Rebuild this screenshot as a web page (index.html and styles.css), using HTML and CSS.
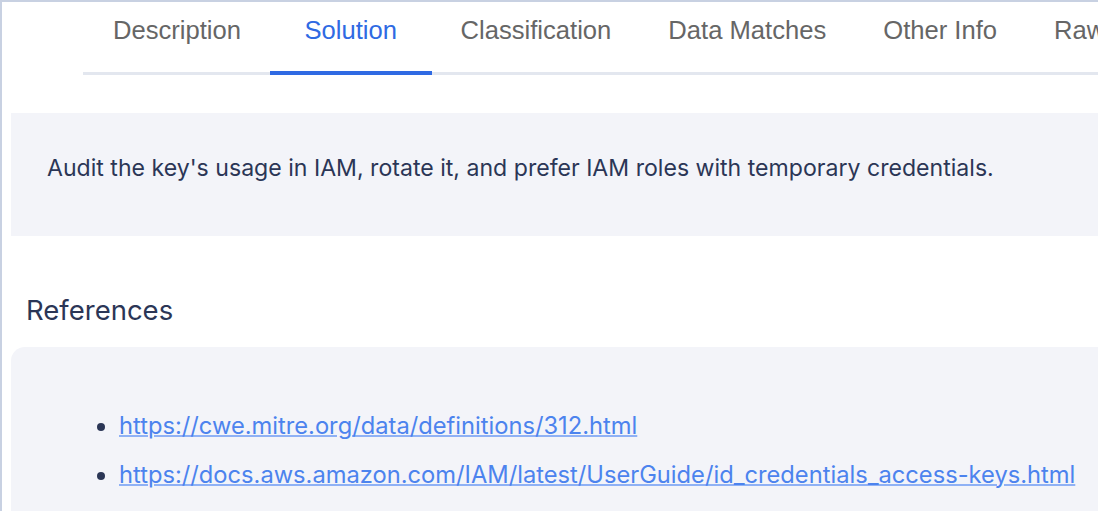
FILE: index.html
```html
<!DOCTYPE html>
<html lang="en">
<head>
<meta charset="utf-8">
<title>Solution</title>
<link rel="stylesheet" href="styles.css">
</head>
<body>
<div class="panel">
  <nav class="tabs">
    <div class="tab">Description</div>
    <div class="tab active">Solution</div>
    <div class="tab">Classification</div>
    <div class="tab">Data Matches</div>
    <div class="tab">Other Info</div>
    <div class="tab">Raw Data</div>
  </nav>
  <section class="solution">
    <p>Audit the key's usage in IAM, rotate it, and prefer IAM roles with temporary credentials.</p>
  </section>
  <h2 class="refs-title">References</h2>
  <section class="refs">
    <ul>
      <li><a href="#">https://cwe.mitre.org/data/definitions/312.html</a></li>
      <li><a href="#">https://docs.aws.amazon.com/IAM/latest/UserGuide/id_credentials_access-keys.html</a></li>
    </ul>
  </section>
</div>
</body>
</html>
```
FILE: styles.css
```css
html, body {
  margin: 0;
  height: 100%;
  overflow: hidden;
}
body {
  background: #c8d1e2;
  padding: 2px 0 0 2px;
  box-sizing: border-box;
}
.panel {
  background: #ffffff;
  height: 100%;
  overflow: hidden;
  font-family: Inter, "Liberation Sans", sans-serif;
  color: #2b3656;
}
.tabs {
  display: flex;
  margin-left: 81px;
  border-bottom: 3px solid #e3e7ef;
  height: 70px;
  white-space: nowrap;
  font-family: "Liberation Sans", Arial, sans-serif;
  font-size: 25.6px;
}
.tab {
  padding: 0 28.5px;
  color: #666666;
  line-height: 56px;
  flex: none;
  position: relative;
}
.tab:first-child {
  padding-left: 30px;
}
.tab.active {
  color: #2f6ae3;
  padding: 0 35px;
}
.tab.active::after {
  content: "";
  position: absolute;
  left: 0;
  right: 0;
  bottom: -3px;
  height: 4px;
  background: #2f6ae3;
}
.solution {
  margin: 38px 0 0 9px;
  background: #f3f4f9;
  height: 123px;
  padding: 0 36px;
  box-sizing: border-box;
  display: flex;
  align-items: center;
}
.solution p {
  margin: 0 0 14px;
  font-size: 23.1px;
  line-height: 36px;
  white-space: nowrap;
}
.refs-title {
  margin: 54px 0 0 24px;
  font-size: 27.5px;
  font-weight: 400;
  line-height: 40px;
}
.refs {
  margin: 17px 0 0 9px;
  background: #f3f4f9;
  border-radius: 14px 0 0 0;
  height: 200px;
  padding-top: 61px;
  box-sizing: border-box;
}
.refs ul {
  margin: 0;
  padding-left: 108px;
  font-size: 23.7px;
  line-height: 36px;
}
.refs li {
  margin-bottom: 13px;
  white-space: nowrap;
}
.refs li::marker {
  color: #2b3656;
}
.refs a {
  color: #4c83ee;
  text-decoration-color: #8fb1f5;
  text-decoration-thickness: 1.6px;
}
```
